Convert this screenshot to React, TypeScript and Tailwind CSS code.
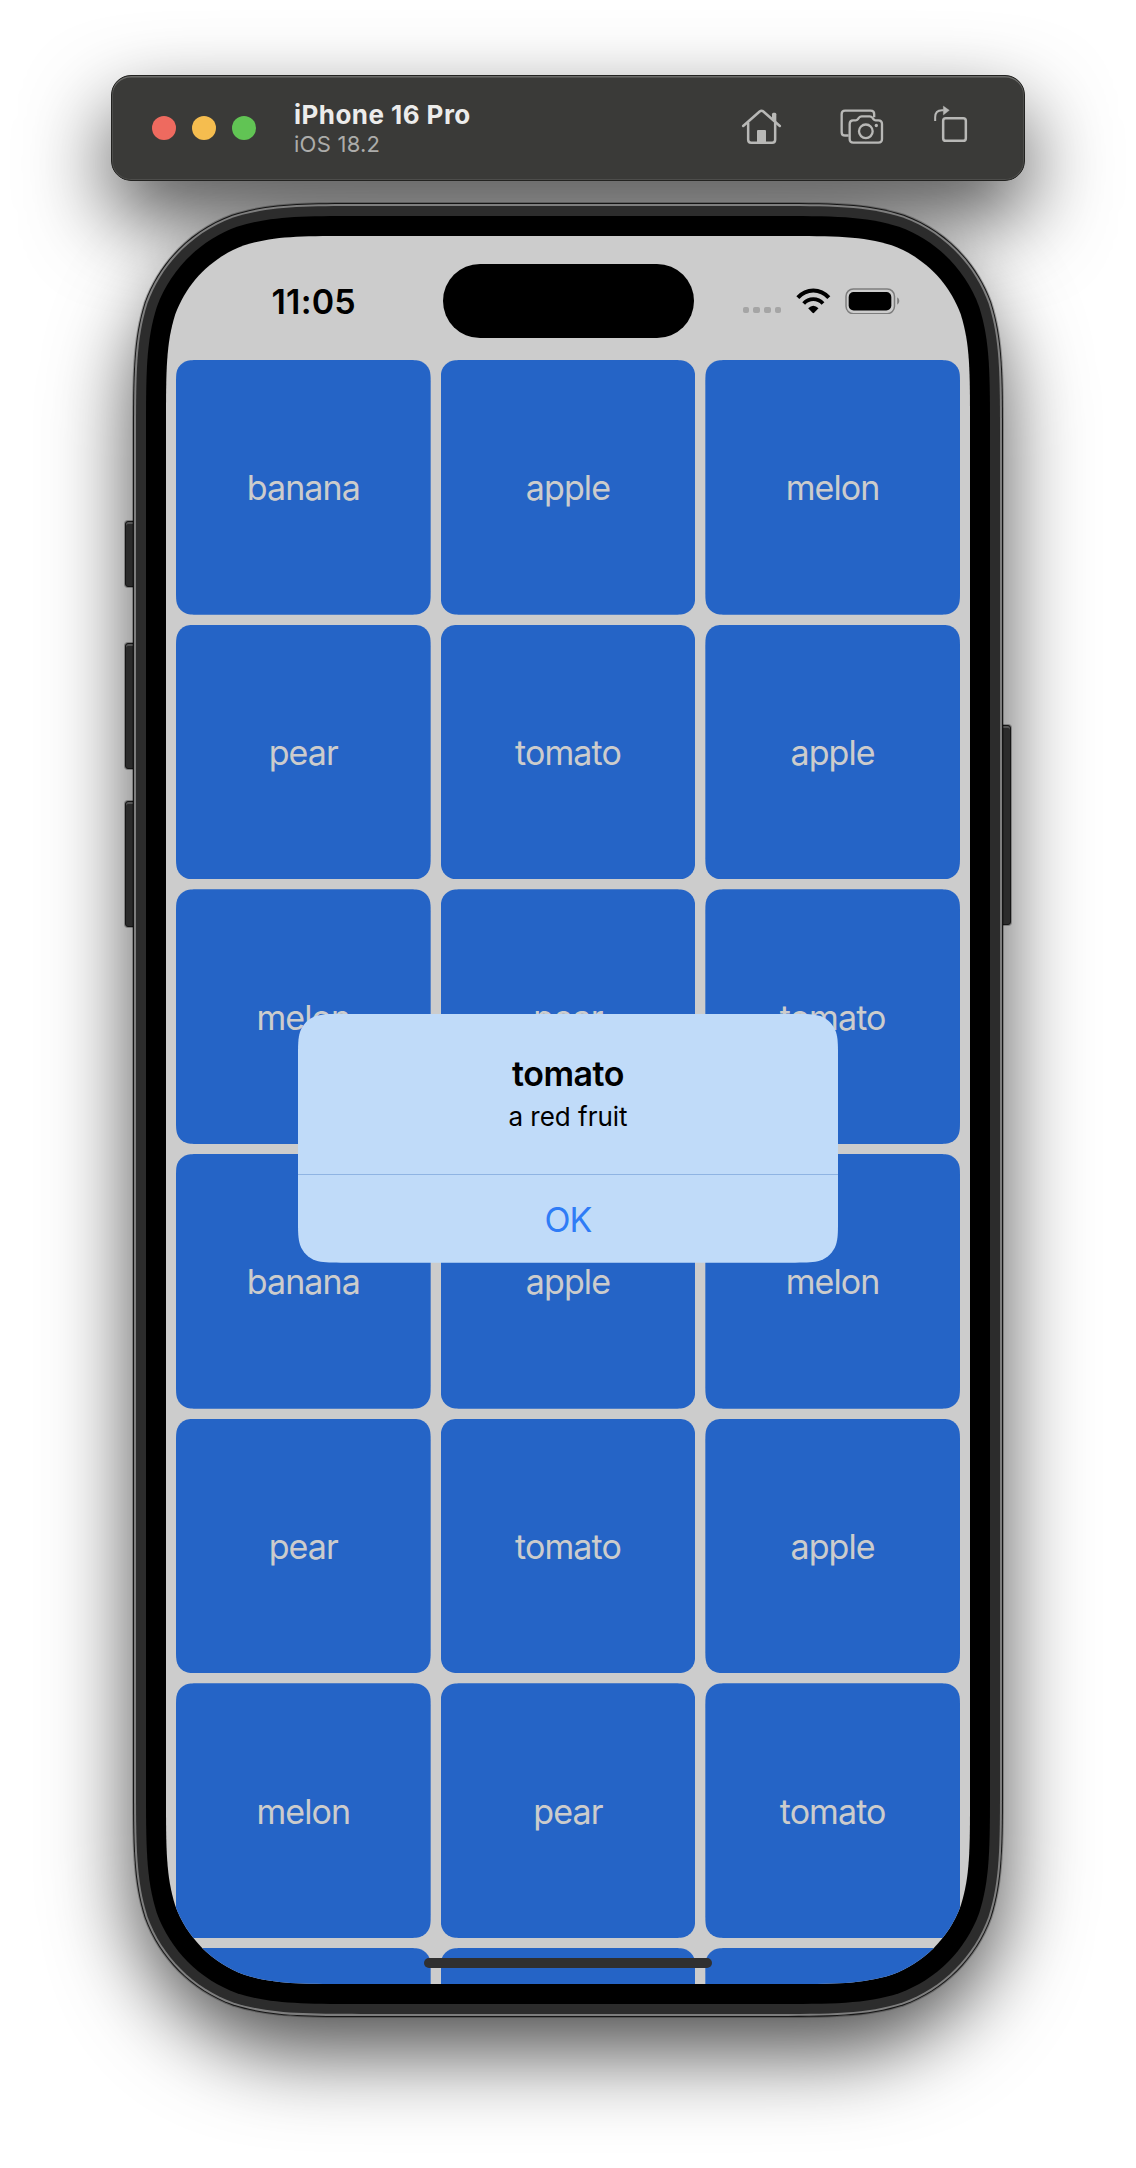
import type { ReactNode } from "react";

const FRUITS = [
  "banana", "apple", "melon",
  "pear", "tomato", "apple",
  "melon", "pear", "tomato",
  "banana", "apple", "melon",
  "pear", "tomato", "apple",
  "melon", "pear", "tomato",
  "", "", "",
];

/** Outline of a w x h rectangle whose corners have continuous curvature. */
function smoothRect(w: number, h: number, r: number): string {
  const a = 1.52866 * r;
  const b = 1.08849 * r;
  const c = 0.86841 * r;
  const d = 0.63149 * r;
  const e = 0.07491 * r;
  const f = 0.37282 * r;
  const g = 0.16906 * r;
  return [
    `M${a} 0L${w - a} 0`,
    `C${w - b} 0 ${w - c} 0 ${w - d} ${e}`,
    `C${w - f} ${g} ${w - g} ${f} ${w - e} ${d}`,
    `C${w} ${c} ${w} ${b} ${w} ${a}`,
    `L${w} ${h - a}`,
    `C${w} ${h - b} ${w} ${h - c} ${w - e} ${h - d}`,
    `C${w - g} ${h - f} ${w - f} ${h - g} ${w - d} ${h - e}`,
    `C${w - c} ${h} ${w - b} ${h} ${w - a} ${h}`,
    `L${a} ${h}`,
    `C${b} ${h} ${c} ${h} ${d} ${h - e}`,
    `C${f} ${h - g} ${g} ${h - f} ${e} ${h - d}`,
    `C0 ${h - c} 0 ${h - b} 0 ${h - a}`,
    `L0 ${a}`,
    `C0 ${b} 0 ${c} ${e} ${d}`,
    `C${g} ${f} ${f} ${g} ${d} ${e}`,
    `C${c} 0 ${b} 0 ${a} 0Z`,
  ].join("");
}

function Smooth({ w, h, r, className, children }: { w: number; h: number; r: number; className: string; children?: ReactNode }) {
  return (
    <div className={className} style={{ width: w, height: h, clipPath: `path("${smoothRect(w, h, r)}")` }}>
      {children}
    </div>
  );
}

function HomeIcon() {
  return (
    <svg viewBox="120 129 130 150" className="h-[50px] w-[43.33px]" fill="none" stroke="#b8b8b6" strokeWidth="7.5" strokeLinecap="round" strokeLinejoin="round">
      <path d="M129.500 198L179 154.500Q184.500 150 190 154.500L239.500 198" />
      <path d="M144.500 190V239Q144.500 248 153.500 248H216.500Q225.500 248 225.500 239V190" />
      <path d="M216 163Q216 158.500 220 158.500H225Q229 158.500 229 163V186L216 174Z" fill="#b8b8b6" stroke="none" />
      <path d="M171 249V213Q171 210 174 210H195Q198 210 198 213V249Z" fill="#b8b8b6" stroke="none" />
    </svg>
  );
}

function ScreenshotIcon() {
  return (
    <svg viewBox="410 129 150 150" className="h-[50px] w-[50px]" fill="none" stroke="#b8b8b6" strokeWidth="7" strokeLinejoin="round">
      <path d="M445 226.500H434Q424 226.500 424 216.500V162Q424 152 434 152H511Q521.500 152 521.500 162V172" />
      <path d="M458 181H466Q470 181 473 177L476 173Q479 169 484 169H508Q513 169 516 173L519 177Q522 181 526 181H534Q545 181 545 192V237Q545 248 534 248H459Q448 248 448 237V192Q448 181 458 181Z" />
      <circle cx="496.500" cy="214" r="20.500" />
      <circle cx="528" cy="196.500" r="5" fill="#b8b8b6" stroke="none" />
    </svg>
  );
}

function RotateIcon() {
  return (
    <svg viewBox="690 129 120 150" className="h-[50px] w-10" fill="none" stroke="#b8b8b6">
      <rect x="729.500" y="174.500" width="68" height="68" rx="8" strokeWidth="7.500" />
      <path d="M705.500 183V172Q705.500 151 726 151H731" strokeWidth="6" />
      <path d="M730 138L748 151L730 165Z" fill="#b8b8b6" stroke="#b8b8b6" strokeWidth="1" strokeLinejoin="round" />
    </svg>
  );
}

function WifiIcon() {
  return (
    <svg viewBox="287 294 104 78" className="h-[26px] w-[34.67px]" fill="none" stroke="#000">
      <path d="M292.500 323Q312 301.500 339 301.500Q366 301.500 385.500 323" strokeWidth="12" />
      <path d="M310 340.500Q322 327.500 339 327.500Q356 327.500 368 340.500" strokeWidth="11.500" />
      <path d="M323.500 355Q331 347 339 347Q347 347 354.500 355L341.500 368.500Q339 371 336.500 368.500Z" fill="#000" stroke="none" />
    </svg>
  );
}

function BatteryIcon() {
  return (
    <svg viewBox="434 293 165 80" className="h-[26.67px] w-[55px]" fill="none">
      <rect x="437" y="296" width="145.500" height="74" rx="22" stroke="#7d7d7d" strokeWidth="4.500" />
      <rect x="445" y="305" width="128" height="55.500" rx="15" fill="#000" />
      <path d="M590.500 321Q597 324 597 332Q597 340 590.500 343Z" fill="#7d7d7d" />
    </svg>
  );
}

function SideButton({ className }: { className: string }) {
  return <div className={`absolute -z-10 border border-[#151515] bg-[#2b2b2b] shadow-[0_0_0_1px_rgba(0,0,0,0.28),inset_0_2px_0_#555] ${className}`} />;
}

function Toolbar() {
  return (
    <header className="relative flex h-[106px] w-[914px] items-center rounded-[20px] border border-[#222220] bg-[#3a3a38] pl-10 pr-[54px] shadow-[inset_0_1.500px_0_#6b6b69,inset_0_0_0_1px_#4d4d4b]">
      <div className="absolute -inset-px -z-20 rounded-[20px] shadow-[0_36px_84px_rgba(0,0,0,0.7)]" />
      <div className="flex gap-4">
        <span className="size-6 rounded-full bg-[#ee6a5f]" />
        <span className="size-6 rounded-full bg-[#f5bd4f]" />
        <span className="size-6 rounded-full bg-[#61c454]" />
      </div>
      <div className="ml-[38px] flex flex-col">
        <h1 className="text-[26px] font-bold leading-8 tracking-[0.450px] text-[#ececeb]">iPhone 16 Pro</h1>
        <p className="text-[22px] leading-[26px] tracking-[0.250px] text-[#acacaa]">iOS 18.2</p>
      </div>
      <div className="ml-auto flex items-center">
        <HomeIcon />
        <div className="ml-[53.330px]"><ScreenshotIcon /></div>
        <div className="ml-[43.330px]"><RotateIcon /></div>
      </div>
    </header>
  );
}

function StatusBar() {
  return (
    <div className="flex h-[124px] shrink-0 items-start">
      <time className="ml-[105.500px] mt-[46px] w-[110px] text-[34px] font-semibold leading-10 tracking-[0.200px] text-black">11:05</time>
      <div className="ml-[61px] mt-[27.500px] h-[74px] w-[251px] rounded-full bg-black" />
      <div className="ml-[49px] mt-[70.500px] flex gap-1">
        <span className="size-[6.700px] rounded-[2px] bg-[#a5a5a5]" />
        <span className="size-[6.700px] rounded-[2px] bg-[#a5a5a5]" />
        <span className="size-[6.700px] rounded-[2px] bg-[#a5a5a5]" />
        <span className="size-[6.700px] rounded-[2px] bg-[#a5a5a5]" />
      </div>
      <div className="ml-[15px] mt-[52px]"><WifiIcon /></div>
      <div className="ml-[14.330px] mt-[51.670px]"><BatteryIcon /></div>
    </div>
  );
}

function Alert() {
  return (
    <div className="absolute left-[132px] top-[778px]">
      <Smooth w={540} h={248.67} r={28} className="flex flex-col bg-[#c0dbf9] text-center">
        <div className="h-[161px] border-b border-[#8fb4e3] pt-[38px] text-black">
          <h2 className="text-[34px] font-semibold leading-[44px] tracking-[-0.450px]">tomato</h2>
          <p className="text-[26px] leading-[42px]">a red fruit</p>
        </div>
        <button className="flex-1 pt-0.5 text-[34px] leading-10 tracking-[-0.800px] text-[#2f7cf6]">OK</button>
      </Smooth>
    </div>
  );
}

function Screen() {
  return (
    <Smooth w={804} h={1748} r={124} className="relative flex flex-col overflow-hidden bg-[#ccc]">
      <StatusBar />
      <div className="grid shrink-0 grid-cols-3 gap-2.5 px-2.5">
        {FRUITS.map((name, i) => (
          <Smooth key={i} w={254.67} h={254.67} r={16} className="flex items-center justify-center bg-[#2564c6] pt-0.5 text-[34px] leading-10 tracking-[-0.900px] text-[#cccccc]">
            {name}
          </Smooth>
        ))}
      </div>
      <Alert />
      <div className="absolute bottom-4 left-[258px] h-2.5 w-72 rounded-full bg-[#303030]" />
    </Smooth>
  );
}

function Phone() {
  return (
    <main className="relative mt-[21px]">
      <div className="absolute inset-0.5 -z-20 rounded-[170px] shadow-[0_36px_84px_rgba(0,0,0,0.7)]" />
      <SideButton className="-left-[7px] top-[319px] h-[66px] w-4 rounded-[3px]" />
      <SideButton className="-left-[7px] top-[441px] h-[126px] w-4 rounded-[3px]" />
      <SideButton className="-left-[7px] top-[599px] h-[126px] w-4 rounded-[3px]" />
      <SideButton className="-right-[7px] top-[523px] h-[200px] w-4 rounded-[3px]" />
      <Smooth w={872} h={1816} r={158} className="bg-black/25 p-px">
        <Smooth w={870} h={1814} r={157} className="bg-[#151515] p-px">
          <Smooth w={868} h={1812} r={156} className="bg-[#7e7e7e] p-0.5">
            <Smooth w={864} h={1808} r={154} className="bg-[#2c2c2c] p-2.5">
              <Smooth w={844} h={1788} r={144} className="bg-black p-5">
                <Screen />
              </Smooth>
            </Smooth>
          </Smooth>
        </Smooth>
      </Smooth>
    </main>
  );
}

export default function App() {
  return (
    <div className="isolate flex h-[2168px] w-[1136px] flex-col items-center overflow-hidden bg-white pt-[75px] font-[Inter,sans-serif]">
      <Toolbar />
      <Phone />
    </div>
  );
}
